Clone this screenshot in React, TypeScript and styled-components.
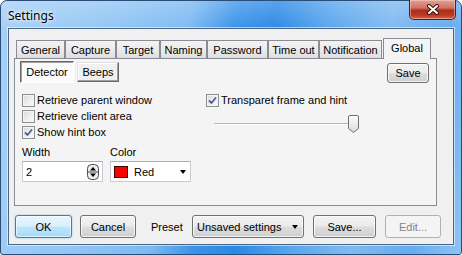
import React from 'react';
import styled, { createGlobalStyle, css } from 'styled-components';

const GlobalStyle = createGlobalStyle`
  html, body { margin: 0; padding: 0; background: #ffffff; }
  * { box-sizing: border-box; }
`;

const uiFont = `'Liberation Sans', Arial, sans-serif`;

// window frame (aero glass)
const Window = styled.div`
  width: 462px;
  height: 255px;
  display: flex;
  flex-direction: column;
  border: 1px solid #2a4d78;
  border-radius: 7px 7px 3px 3px;
  background:
    linear-gradient(180deg, rgba(255, 255, 255, 0.22) 0, rgba(255, 255, 255, 0) 30px),
    linear-gradient(100deg, #a8d0f6 0%, #92c6f4 22%, #7cbaf3 38%, #3b93e9 47%, #2a88e6 55%, #5aa6ee 66%, #7fbaf1 78%, #65abef 90%, #8fc4f4 100%);
  font-family: ${uiFont};
  font-size: 11px;
  color: #000;
`;

const TitleBar = styled.div`
  height: 27px;
  display: flex;
  align-items: flex-start;
  justify-content: space-between;
  padding-left: 7px;
`;

const Title = styled.span`
  font-family: 'Noto Sans', 'Open Sans', sans-serif;
  font-size: 12px;
  line-height: 16px;
  margin-top: 7px;
  color: #000;
  text-shadow: 0 0 6px rgba(255, 255, 255, 0.9), 0 0 3px rgba(255, 255, 255, 0.9);
`;

const CloseButton = styled.div`
  width: 47px;
  height: 20px;
  margin-top: -1px;
  margin-right: 5px;
  display: flex;
  align-items: center;
  justify-content: center;
  border: 1px solid #5a1d16;
  border-top: none;
  border-radius: 0 0 5px 5px;
  background: linear-gradient(180deg, #e3a095 0%, #d07565 40%, #b02e1a 55%, #b53a24 80%, #d9684a 100%);
  box-shadow: inset 0 0 0 1px rgba(255, 220, 210, 0.45);
`;

const Client = styled.div`
  flex: 1;
  margin: 0 7px 9px 7px;
  border: 1px solid #4a6785;
  box-shadow: 0 0 0 1px rgba(255, 255, 255, 0.55);
  background: #f0f0f0;
  display: flex;
  flex-direction: column;
  padding: 9px 16px 0 5px;
`;

// tab strip
const TabStrip = styled.div`
  height: 21px;
  display: flex;
  align-items: flex-end;
  padding-left: 2px;
  position: relative;
  z-index: 1;
`;

const Tab = styled.div<{ $w: number; $active?: boolean }>`
  width: ${(p) => p.$w}px;
  height: 18px;
  margin-bottom: 1px;
  display: flex;
  align-items: center;
  justify-content: center;
  border: 1px solid #898c95;
  border-bottom: none;
  background: linear-gradient(180deg, #f3f3f3 0%, #ebebeb 50%, #dedede 100%);
  white-space: nowrap;
  ${(p) =>
    p.$active &&
    css`
      height: 21px;
      margin-bottom: 0;
      margin-left: 1px;
      padding-bottom: 3px;
      background: #f4f4f4;
    `}
`;

const Panel = styled.div`
  height: 148px;
  margin-top: -1px;
  border: 1px solid #898c95;
  background: #f4f4f4;
  padding: 2px 7px 0 5px;
  display: flex;
  flex-direction: column;
`;

const TopRow = styled.div`
  height: 22px;
  display: flex;
  align-items: flex-start;
  gap: 3px;
`;

const ModeButton = styled.div<{ $w: number; $pressed?: boolean }>`
  width: ${(p) => p.$w}px;
  height: ${(p) => (p.$pressed ? 22 : 20)}px;
  margin-top: ${(p) => (p.$pressed ? 0 : 1)}px;
  display: flex;
  align-items: center;
  justify-content: center;
  border: 1px solid;
  ${(p) =>
    p.$pressed
      ? css`
          border-color: #696969 #ffffff #ffffff #696969;
          box-shadow: inset 1px 1px 0 #a0a0a0;
          background: #fbfbfb;
        `
      : css`
          border-color: #e3e3e3 #696969 #696969 #e3e3e3;
          box-shadow: inset -1px -1px 0 #a0a0a0, inset 1px 1px 0 #ffffff;
          background: #f0f0f0;
        `}
`;

const buttonLook = css`
  border: 1px solid #707070;
  border-radius: 3px;
  background: linear-gradient(180deg, #f2f2f2 0%, #ebebeb 48%, #dddddd 52%, #cfcfcf 100%);
  box-shadow: inset 0 0 0 1px rgba(255, 255, 255, 0.75);
`;

const Button = styled.div<{ $w: number; $h?: number; $default?: boolean; $disabled?: boolean }>`
  width: ${(p) => p.$w}px;
  height: ${(p) => p.$h ?? 23}px;
  flex: none;
  display: flex;
  align-items: center;
  justify-content: center;
  white-space: nowrap;
  ${buttonLook}
  ${(p) =>
    p.$default &&
    css`
      border-color: #3c7fb1;
      background: linear-gradient(180deg, #eaf6fd 0%, #d9f0fc 48%, #bee6fd 52%, #a7d9f5 100%);
      box-shadow: inset 0 0 0 1px rgba(255, 255, 255, 0.6), 0 0 2px rgba(60, 160, 230, 0.6);
    `}
  ${(p) =>
    p.$disabled &&
    css`
      border-color: #adb2b5;
      background: #f4f4f4;
      box-shadow: none;
      color: #838383;
    `}
`;

const SaveSmall = styled(Button)`
  margin-left: auto;
  margin-top: 2px;
`;

const Body = styled.div`
  display: flex;
  padding: 11px 0 0 2px;
`;

const LeftCol = styled.div`
  width: 184px;
  display: flex;
  flex-direction: column;
  gap: 3px;
`;

const RightCol = styled.div`
  display: flex;
  flex-direction: column;
`;

const CheckRow = styled.label`
  height: 13px;
  display: flex;
  align-items: center;
  gap: 2px;
  line-height: 13px;
  white-space: nowrap;
`;

const Box = styled.span`
  width: 13px;
  height: 13px;
  flex: none;
  border: 1px solid #8e8f8f;
  background: linear-gradient(135deg, #d6d8db 0%, #eeeeee 55%, #fbfbfb 100%);
  box-shadow: inset 0 0 0 1px #f4f4f4;
  display: flex;
  align-items: center;
  justify-content: center;
`;

const Fields = styled.div`
  display: flex;
  gap: 7px;
  margin-top: 4px;
`;

const FieldGroup = styled.div`
  display: flex;
  flex-direction: column;
  gap: 2px;
`;

const FieldLabel = styled.span`
  line-height: 13px;
`;

const fieldLook = css`
  width: 81px;
  height: 21px;
  border: 1px solid #c8ccd2;
  border-top-color: #abadb3;
  background: #ffffff;
  display: flex;
  align-items: center;
`;

const SpinField = styled.div`
  ${fieldLook}
  padding: 0 3px 0 3px;
  justify-content: space-between;
`;

const ColorField = styled.div`
  ${fieldLook}
  padding: 0 4px 0 3px;
  gap: 6px;
`;

const Swatch = styled.span<{ $c: string }>`
  width: 14px;
  height: 12px;
  background: ${(p) => p.$c};
  border: 1px solid #3a0000;
`;

const Arrow = styled.span`
  margin-left: auto;
  width: 0;
  height: 0;
  border-left: 3.5px solid transparent;
  border-right: 3.5px solid transparent;
  border-top: 4px solid #000;
`;

const Slider = styled.div`
  position: relative;
  width: 145px;
  height: 18px;
  margin: 8px 0 0 8px;
`;

const Track = styled.div`
  position: absolute;
  left: 0;
  top: 8px;
  width: 140px;
  height: 2px;
  border-top: 1px solid #b4b4b4;
  border-bottom: 1px solid #ffffff;
`;

const Thumb = styled.svg`
  position: absolute;
  left: 134px;
  top: 0;
`;

const BottomRow = styled.div`
  height: 23px;
  margin-top: 9px;
  padding-left: 1px;
  display: flex;
  align-items: center;
`;

const Gap = styled.span<{ $w: number }>`
  width: ${(p) => p.$w}px;
  flex: none;
`;

const PresetLabel = styled.span`
  width: 33px;
  flex: none;
  white-space: nowrap;
`;

const Combo = styled.div`
  ${buttonLook}
  width: 112px;
  height: 23px;
  flex: none;
  display: flex;
  align-items: center;
  padding: 0 5px 0 4px;
  white-space: nowrap;
`;

const tabs = [
  { label: 'General', w: 49 },
  { label: 'Capture', w: 51 },
  { label: 'Target', w: 44 },
  { label: 'Naming', w: 47 },
  { label: 'Password', w: 61 },
  { label: 'Time out', w: 51 },
  { label: 'Notification', w: 63 },
  { label: 'Global', w: 48, active: true },
];

const Check = () => (
  <svg width="9" height="9" viewBox="0 0 9 9">
    <path d="M1 4.5 L3.5 7 L8 1.5" fill="none" stroke="#4c5f98" strokeWidth="1.8" />
  </svg>
);

const CheckBox: React.FC<{ checked?: boolean; label: string }> = ({ checked, label }) => (
  <CheckRow>
    <Box>{checked && <Check />}</Box>
    <span>{label}</span>
  </CheckRow>
);

export default function App() {
  return (
    <>
      <GlobalStyle />
      <Window>
        <TitleBar>
          <Title>Settings</Title>
          <CloseButton>
            <svg width="14" height="11" viewBox="0 0 14 11">
              <path d="M3 2 L11 9 M11 2 L3 9" stroke="#3c1410" strokeWidth="4" strokeLinecap="round" />
              <path d="M3 2 L11 9 M11 2 L3 9" stroke="#ffffff" strokeWidth="2" strokeLinecap="round" />
            </svg>
          </CloseButton>
        </TitleBar>
        <Client>
          <TabStrip>
            {tabs.map((t) => (
              <Tab key={t.label} $w={t.w} $active={t.active}>
                {t.label}
              </Tab>
            ))}
          </TabStrip>
          <Panel>
            <TopRow>
              <ModeButton $w={54} $pressed>
                Detector
              </ModeButton>
              <ModeButton $w={42}>Beeps</ModeButton>
              <SaveSmall $w={42} $h={20}>
                Save
              </SaveSmall>
            </TopRow>
            <Body>
              <LeftCol>
                <CheckBox label="Retrieve parent window" />
                <CheckBox label="Retrieve client area" />
                <CheckBox checked label="Show hint box" />
                <Fields>
                  <FieldGroup>
                    <FieldLabel>Width</FieldLabel>
                    <SpinField>
                      <span>2</span>
                      <svg width="12" height="16" viewBox="0 0 12 16">
                        <rect x="0.5" y="0.5" width="11" height="15" rx="4" fill="#ececec" stroke="#4d4d4d" />
                        <path d="M1 8 H11" stroke="#4d4d4d" />
                        <path d="M3 6.5 H9 L6 3 Z" fill="#000" />
                        <path d="M3 9.5 H9 L6 13 Z" fill="#000" />
                      </svg>
                    </SpinField>
                  </FieldGroup>
                  <FieldGroup>
                    <FieldLabel>Color</FieldLabel>
                    <ColorField>
                      <Swatch $c="#ff0000" />
                      <span>Red</span>
                      <Arrow />
                    </ColorField>
                  </FieldGroup>
                </Fields>
              </LeftCol>
              <RightCol>
                <CheckBox checked label="Transparet frame and hint" />
                <Slider>
                  <Track />
                  <Thumb width="11" height="18" viewBox="0 0 11 18">
                    <defs>
                      <linearGradient id="thumbFill" x1="0" y1="0" x2="0" y2="1">
                        <stop offset="0" stopColor="#fbfbfb" />
                        <stop offset="0.5" stopColor="#ececec" />
                        <stop offset="1" stopColor="#d9d9d9" />
                      </linearGradient>
                    </defs>
                    <path
                      d="M2 0.5 H9 Q10.5 0.5 10.5 2 V13.5 L5.5 17.5 L0.5 13.5 V2 Q0.5 0.5 2 0.5 Z"
                      fill="url(#thumbFill)"
                      stroke="#707070"
                    />
                  </Thumb>
                </Slider>
              </RightCol>
            </Body>
          </Panel>
          <BottomRow>
            <Button $w={57} $default>
              OK
            </Button>
            <Gap $w={8} />
            <Button $w={56}>Cancel</Button>
            <Gap $w={15} />
            <PresetLabel>Preset</PresetLabel>
            <Gap $w={8} />
            <Combo>
              <span>Unsaved settings</span>
              <Arrow />
            </Combo>
            <Gap $w={9} />
            <Button $w={63}>Save...</Button>
            <Gap $w={9} />
            <Button $w={56} $disabled>
              Edit...
            </Button>
          </BottomRow>
        </Client>
      </Window>
    </>
  );
}
